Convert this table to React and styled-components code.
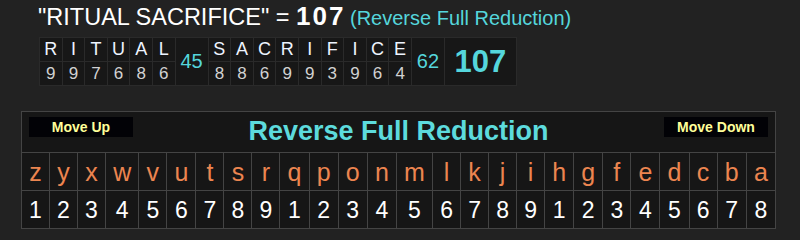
import React from 'react';
import styled, { createGlobalStyle } from 'styled-components';

const GlobalStyle = createGlobalStyle`
  body {
    margin: 0;
    background: #222222;
    font-family: "Liberation Sans", Arial, sans-serif;
  }
`;

const Page = styled.div`
  padding: 3px 0 0 0;
`;

const Heading = styled.div`
  margin: 0 0 0 38px;
  height: 26px;
  line-height: 26px;
  font-size: 23.5px;
  color: #ffffff;
  white-space: nowrap;
`;

const HeadTotal = styled.span`
  font-size: 26px;
  letter-spacing: 2px;
  margin-right: -2px;
  font-weight: bold;
`;

const HeadCipher = styled.span`
  font-size: 20px;
  color: #55d6dc;
`;

const WordTable = styled.table`
  margin: 8px 0 0 39px;
  border-collapse: collapse;
  background: #171717;
  border: 1px solid #2e2e2e;
`;

const Cell = styled.td`
  width: 21.6px;
  height: 23px;
  padding: 0;
  border: 1px solid #2a2a2a;
  text-align: center;
  vertical-align: middle;
  line-height: 23px;
  font-size: ${p => (p.$num ? 17 : 18)}px;
  color: ${p => (p.$num ? '#d2d2d2' : '#eef4ff')};
`;

const SumCell = styled.td`
  width: ${p => p.$w}px;
  padding: 0;
  border: 1px solid #2a2a2a;
  text-align: center;
  vertical-align: middle;
  color: #55d6dc;
  font-size: ${p => (p.$big ? 31 : 20)}px;
  font-weight: ${p => (p.$big ? 'bold' : 'normal')};
`;

const CipherTable = styled.table`
  margin: 25px 0 0 21px;
  width: 755px;
  border-collapse: collapse;
  background: #161616;
  border: 1px solid #444444;
`;

const HeaderCell = styled.th`
  height: 40px;
  padding: 0;
  border: 1px solid #444444;
  vertical-align: top;
`;

const HeaderBar = styled.div`
  display: grid;
  grid-template-columns: 104px 1fr 104px;
  padding: 5px 7px 0 7px;
  height: 35px;
`;

const MoveButton = styled.button`
  width: 104px;
  height: 20px;
  padding: 0;
  border: none;
  background: #020206;
  color: #ffff99;
  font-family: "Liberation Sans", Arial, sans-serif;
  font-size: 14px;
  font-weight: bold;
`;

const CipherName = styled.div`
  text-align: center;
  font-size: 27px;
  font-weight: bold;
  line-height: 29px;
  color: #5ddbdd;
`;

const LetterCell = styled.td`
  height: 37px;
  padding: 0 7px;
  border: 1px solid #444444;
  text-align: center;
  vertical-align: middle;
  font-size: ${p => (p.$num ? 23 : 25)}px;
  line-height: 30px;
  color: ${p => (p.$num ? '#ffffff' : '#ec8550')};
`;

const words = [
  { letters: 'RITUAL', values: [9, 9, 7, 6, 8, 6], sum: 45 },
  { letters: 'SACRIFICE', values: [8, 8, 6, 9, 9, 3, 9, 6, 4], sum: 62 },
];

const alphabet = 'zyxwvutsrqponmlkjihgfedcba'.split('');

export default function App() {
  return (
    <Page>
      <GlobalStyle />
      <Heading>
        "RITUAL SACRIFICE" = <HeadTotal>107</HeadTotal>{' '}
        <HeadCipher>(Reverse Full Reduction)</HeadCipher>
      </Heading>

      <WordTable>
        <tbody>
          <tr>
            {words.map(w => (
              <React.Fragment key={w.letters}>
                {w.letters.split('').map((ch, i) => (
                  <Cell key={i}>{ch}</Cell>
                ))}
                <SumCell rowSpan={2} $w={32}>{w.sum}</SumCell>
              </React.Fragment>
            ))}
            <SumCell rowSpan={2} $w={71} $big>107</SumCell>
          </tr>
          <tr>
            {words.map(w =>
              w.values.map((v, i) => (
                <Cell key={w.letters + i} $num>{v}</Cell>
              ))
            )}
          </tr>
        </tbody>
      </WordTable>

      <CipherTable>
        <tbody>
          <tr>
            <HeaderCell colSpan={26}>
              <HeaderBar>
                <MoveButton>Move Up</MoveButton>
                <CipherName>Reverse Full Reduction</CipherName>
                <MoveButton>Move Down</MoveButton>
              </HeaderBar>
            </HeaderCell>
          </tr>
          <tr>
            {alphabet.map(ch => (
              <LetterCell key={ch}>{ch}</LetterCell>
            ))}
          </tr>
          <tr>
            {alphabet.map((ch, i) => (
              <LetterCell key={ch} $num>{(i % 9) + 1}</LetterCell>
            ))}
          </tr>
        </tbody>
      </CipherTable>
    </Page>
  );
}
